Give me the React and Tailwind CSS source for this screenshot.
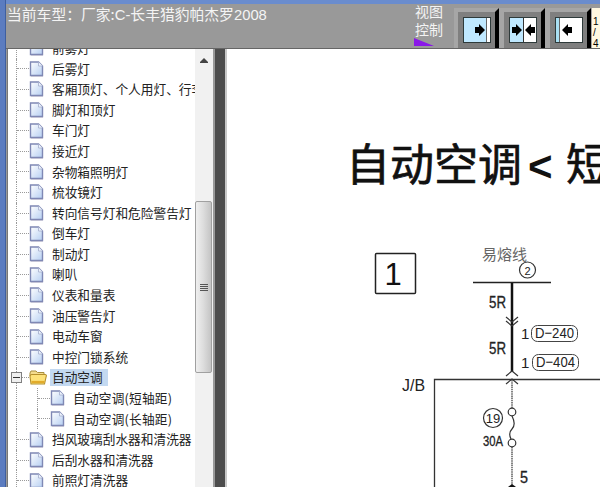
import React from "react";

function PageIcon() {
  return (
    <svg width="15" height="16" viewBox="0 0 15 16" className="shrink-0">
      <defs>
        <linearGradient id="pg" x1="0" y1="0" x2="1" y2="1">
          <stop offset="0" stopColor="#ffffff" />
          <stop offset="1" stopColor="#b6cff2" />
        </linearGradient>
      </defs>
      <path d="M1.5 1 H9.5 L13.5 5 V14.5 H1.5 Z" fill="url(#pg)" stroke="#7f88b4" strokeWidth="1.4" />
      <path d="M9.5 1 V5 H13.5" fill="#eef4fd" stroke="#a4adcc" strokeWidth="0.8" />
      <path d="M2 15.5 H14" stroke="#c4c4d6" strokeWidth="1" />
    </svg>
  );
}

function FolderIcon() {
  return (
    <svg width="18" height="15" viewBox="0 0 18 15" className="shrink-0">
      <path d="M1 3 L2 1 H7 L8.5 2.5 H15 V6 H1 Z" fill="#f4dc8e" stroke="#a98f3e" strokeWidth="1" />
      <path d="M1 6.5 C1 5 2 4.5 3 4.5 H16 C17.4 4.5 17.6 5.5 17.2 6.5 L15.5 14 H2 Z" fill="#fde27a" stroke="#b48f2c" strokeWidth="1.1" />
      <path d="M2.5 12 H15.5" stroke="#e2ab2a" strokeWidth="2.2" />
    </svg>
  );
}

function Guide() {
  return (
    <span className="ml-[8px] self-stretch border-l border-dotted border-[#9a9a9a] flex items-center shrink-0">
      <span className="block w-[12px] border-t border-dotted border-[#9a9a9a]" />
    </span>
  );
}

function Row({ label }) {
  return (
    <div className="flex items-center h-[20.6px]">
      <Guide />
      <PageIcon />
      <span className="ml-[8px] text-[12.7px] leading-none text-[#222222] whitespace-nowrap">{label}</span>
    </div>
  );
}

function OpenRow({ label }) {
  return (
    <div className="relative flex items-center h-[20.6px]">
      <Guide />
      <span className="absolute left-[3px] top-[4px] w-[11px] h-[11px] bg-[#f0f0f0] border border-[#808080] flex items-center justify-center">
        <span className="block w-[7px] h-px bg-[#333333]" />
      </span>
      <FolderIcon />
      <span className="ml-[3px] pl-[2px] h-[17px] w-[58px] flex items-center bg-[#c3d9f1] text-[12.7px] leading-none text-[#222222] whitespace-nowrap">{label}</span>
    </div>
  );
}

function ChildRow({ label }) {
  return (
    <div className="flex items-center h-[20.6px]">
      <span className="ml-[8px] self-stretch border-l border-dotted border-[#9a9a9a] shrink-0" />
      <span className="ml-[20px] self-stretch border-l border-dotted border-[#9a9a9a] flex items-center shrink-0">
        <span className="block w-[12px] border-t border-dotted border-[#9a9a9a]" />
      </span>
      <PageIcon />
      <span className="ml-[8px] text-[12.7px] tracking-[0.2px] leading-none text-[#222222] whitespace-nowrap">{label}</span>
    </div>
  );
}

function Arrow({ dir }) {
  const d = dir === "r" ? "M0 3 H4 V0 L10 6 L4 12 V9 H0 Z" : "M10 3 H6 V0 L0 6 L6 12 V9 H10 Z";
  return (
    <svg width="10" height="12" viewBox="0 0 10 12" className="shrink-0">
      <path d={d} fill="#000" />
    </svg>
  );
}

function ViewButton({ mode }) {
  return (
    <div className="w-[46px] h-[40px] pl-[4px] pt-[4px] pr-[1px] bg-[#a6a6a6] flex shrink-0">
      <div className="w-[37px] h-[36px] bg-[#7f7f7f] pl-[5px] pt-[5px] shrink-0">
        <div className="w-[28px] h-[26px] border border-[#2e3a3a] flex">
          {mode === "right" && (
            <>
              <div className="flex-1 bg-[#bfe8ff] flex items-center justify-end pr-[1px]"><Arrow dir="r" /></div>
              <div className="w-[4px] bg-white border-l border-[#666666]" />
            </>
          )}
          {mode === "both" && (
            <>
              <div className="flex-1 bg-[#bfe8ff] flex items-center justify-end border-r border-[#333333] pr-[1px]"><Arrow dir="r" /></div>
              <div className="flex-1 bg-white flex items-center justify-start pl-[1px]"><Arrow dir="l" /></div>
            </>
          )}
          {mode === "left" && (
            <>
              <div className="w-[4px] bg-[#a9dff2] border-r border-[#666666]" />
              <div className="flex-1 bg-white flex items-center justify-start pl-[2px]"><Arrow dir="l" /></div>
            </>
          )}
        </div>
      </div>
      <div className="w-[4px] -mt-[4px] h-[40px] bg-black shrink-0 [clip-path:polygon(100%_0,100%_100%,0_100%,0_4px)]" />
    </div>
  );
}

function Diagram() {
  const cjk = '"Noto Sans CJK SC", sans-serif';
  return (
    <svg width="373" height="438" viewBox="227 49 373 438" className="block" fontFamily='"Liberation Sans", sans-serif'>
      <text x="346" y="181" fontSize="44" fontFamily={cjk} fill="#111111" stroke="#111111" strokeWidth="0.7">自动空调</text>
      <text x="528" y="181" fontSize="42" fontWeight="700" fill="#111111">&lt;</text>
      <text x="566" y="181" fontSize="44" fontFamily={cjk} fill="#111111" stroke="#111111" strokeWidth="0.7">短</text>

      <rect x="375.5" y="253.5" width="40" height="40" rx="1" fill="none" stroke="#222222" strokeWidth="1.5" />
      <text x="393" y="285" fontSize="31" textAnchor="middle" fill="#111111">1</text>

      <text x="482" y="260" fontSize="15" fontFamily={cjk} fill="#666666">易熔线</text>
      <circle cx="527.5" cy="270" r="8" fill="#ffffff" stroke="#333333" strokeWidth="1.2" />
      <text x="527.5" y="274.5" fontSize="11" textAnchor="middle" fill="#222222">2</text>

      <path d="M473 282.5 H551" stroke="#222222" strokeWidth="1.5" />
      <path d="M512 283 V372" stroke="#111111" strokeWidth="2.5" />
      <text x="489" y="308" fontSize="16" textLength="17" lengthAdjust="spacingAndGlyphs" fill="#222222" stroke="#222222" strokeWidth="0.3">5R</text>
      <path d="M506 317 L512 322 L518 317 M506 321 L512 326 L518 321" fill="none" stroke="#333333" strokeWidth="1.2" />
      <text x="521" y="339" fontSize="15" fill="#222222">1</text>
      <rect x="531.5" y="325.5" width="46" height="16" rx="6" fill="#ffffff" stroke="#444444" />
      <text x="535" y="338" fontSize="15" textLength="39" lengthAdjust="spacingAndGlyphs" fill="#222222">D−240</text>
      <text x="489" y="354" fontSize="16" textLength="17" lengthAdjust="spacingAndGlyphs" fill="#222222" stroke="#222222" strokeWidth="0.3">5R</text>
      <text x="521" y="368" fontSize="15" fill="#222222">1</text>
      <rect x="532.5" y="354.5" width="46" height="16" rx="6" fill="#ffffff" stroke="#444444" />
      <text x="536" y="367" fontSize="15" textLength="39" lengthAdjust="spacingAndGlyphs" fill="#222222">D−404</text>

      <text x="402" y="391" fontSize="16" textLength="23" lengthAdjust="spacingAndGlyphs" fill="#222222">J/B</text>
      <path d="M434.5 487 V379.5 H600" fill="none" stroke="#333333" strokeWidth="1.3" />
      <path d="M506 376 L512 371 L518 376 M506 384 L512 379 L518 384" fill="none" stroke="#333333" strokeWidth="1.2" />
      <path d="M512 380 V408 M512 447 V487" stroke="#666666" strokeWidth="1.6" strokeDasharray="1.5 0.7" />

      <circle cx="493" cy="418" r="9.5" fill="#ffffff" stroke="#333333" strokeWidth="1.2" />
      <text x="493" y="423" fontSize="13" textAnchor="middle" fill="#222222">19</text>
      <circle cx="512" cy="412" r="3.8" fill="#ffffff" stroke="#333333" strokeWidth="1.2" />
      <circle cx="512" cy="443" r="3.8" fill="#ffffff" stroke="#333333" strokeWidth="1.2" />
      <path d="M512 416 C516 424 514 427 512 429 C509 432 509 435 511 439" fill="none" stroke="#333333" strokeWidth="1.2" />
      <text x="483" y="446" fontSize="14" textLength="20" lengthAdjust="spacingAndGlyphs" fill="#222222" stroke="#222222" strokeWidth="0.3">30A</text>
      <text x="520" y="483" fontSize="16" textLength="8" lengthAdjust="spacingAndGlyphs" fill="#222222" stroke="#222222" strokeWidth="0.3">5</text>
      <path d="M508 487 L512 484 L516 487 Z" fill="#111111" />
    </svg>
  );
}

const topRows = ["前雾灯", "后雾灯", "客厢顶灯、个人用灯、行李", "脚灯和顶灯", "车门灯", "接近灯", "杂物箱照明灯", "梳妆镜灯", "转向信号灯和危险警告灯", "倒车灯", "制动灯", "喇叭", "仪表和量表", "油压警告灯", "电动车窗", "中控门锁系统"];
const bottomRows = ["挡风玻璃刮水器和清洗器", "后刮水器和清洗器", "前照灯清洗器"];

export default function App() {
  return (
    <div className="w-[600px] h-[487px] overflow-hidden flex bg-[#999999] font-['Noto_Sans_CJK_SC','Liberation_Sans',sans-serif]">
      <div className="w-[6px] h-full bg-[#5b7cc0] border-r border-[#3f5f9f] shrink-0" />
      <div className="flex-1 min-w-0 flex flex-col">
        <div className="h-[4px] bg-[#6a8ccd] shrink-0" />
        <header className="h-[45px] bg-[#999999] border-b border-[#666666] flex items-start shrink-0">
          <div className="ml-[1px] pt-px text-[14.8px] leading-[18px] text-[#f4f4f4] whitespace-nowrap">
            当前车型：厂家:<span className="font-['Liberation_Sans',sans-serif]">C-</span>长丰猎豹帕杰罗<span className="font-['Liberation_Sans',sans-serif]">2008</span>
          </div>
          <div className="ml-auto flex items-start">
            <div className="relative w-[40px] h-[44px] -mt-[2px] pl-[1px] text-[14px] leading-[18px] text-[#f4f4f4]">
              <div>视图</div>
              <div>控制</div>
              <svg width="20" height="8" viewBox="0 0 20 8" className="absolute left-0 bottom-0">
                <path d="M0 0 L20 8 H0 Z" fill="#8a18e8" />
              </svg>
            </div>
            <div className="flex pt-[4px]">
              <ViewButton mode="right" />
              <ViewButton mode="both" />
              <ViewButton mode="left" />
              <div className="w-[8px] h-[40px] bg-[#fff8e0] text-[10px] leading-[11px] text-black overflow-hidden pl-[1px] pt-[8px] font-['Liberation_Sans',sans-serif]">
                <div>1</div><div>/</div><div>4</div>
              </div>
            </div>
          </div>
        </header>
        <div className="flex-1 min-h-0 flex">
          <aside className="ml-[1px] w-[188px] bg-white border-l border-[#777777] overflow-hidden shrink-0">
            <div className="-mt-[11px]">
              {topRows.map((t) => <Row key={t} label={t} />)}
              <OpenRow label="自动空调" />
              <ChildRow label="自动空调(短轴距)" />
              <ChildRow label="自动空调(长轴距)" />
              {bottomRows.map((t) => <Row key={t} label={t} />)}
            </div>
          </aside>
          <div className="w-[18px] bg-[#f1f1f1] flex flex-col items-center shrink-0 pt-[9px]">
            <svg width="8" height="5" viewBox="0 0 8 5" className="-ml-px"><path d="M4 0 L8 4 V5 H0 V4 Z" fill="#444444" /></svg>
            <div className="mt-[138px] -ml-px w-[17px] h-[172px] rounded-[2px] border border-[#a0a0a0] bg-gradient-to-r from-[#efefef] via-[#dcdcdc] to-[#c4c4c4] flex flex-col items-center justify-center gap-px">
              <span className="block w-[8px] h-px bg-[#555555]" />
              <span className="block w-[8px] h-px bg-[#555555]" />
              <span className="block w-[8px] h-px bg-[#555555]" />
              <span className="block w-[8px] h-px bg-[#555555]" />
            </div>
          </div>
          <div className="w-[2px] bg-[#999999] shrink-0" />
          <div className="w-[10px] bg-[#4d4d4d] shrink-0" />
          <div className="w-[2px] bg-[#c8c8c8] shrink-0" />
          <main className="flex-1 min-w-0 bg-white overflow-hidden">
            <Diagram />
          </main>
        </div>
      </div>
    </div>
  );
}
